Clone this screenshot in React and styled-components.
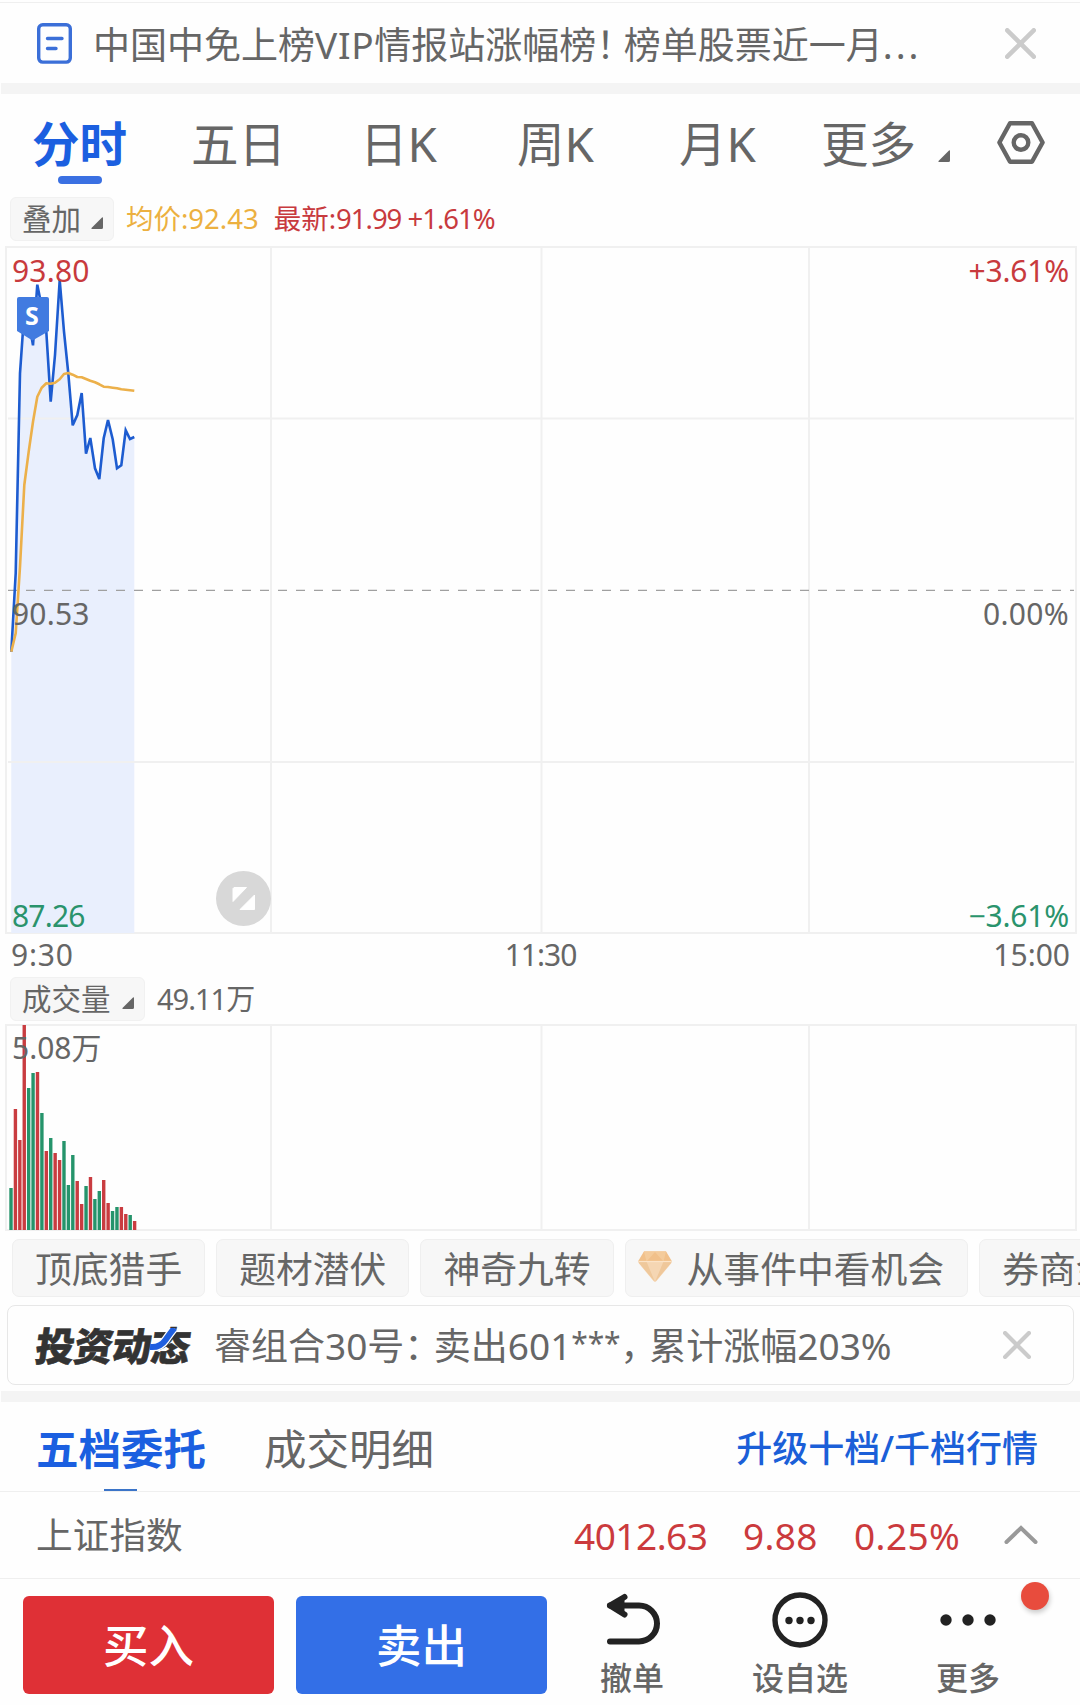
import React from "react";
import styled, { createGlobalStyle } from "styled-components";

const PRICE = [
  [34, 1235], [47, 1000], [60, 400], [73, 215], [86, 240], [99, 316], [112, 134], [125, 200],
  [139, 275], [152, 485], [165, 345], [179, 120], [192, 275], [205, 400], [218, 556], [232, 525],
  [245, 459], [258, 641], [271, 594], [285, 685], [298, 717], [311, 595], [324, 540], [338, 598],
  [351, 685], [364, 676], [377, 571], [390, 597], [403, 591],
];

const AVERAGE = [
  [34, 1235], [47, 1180], [60, 980], [73, 735], [86, 635], [99, 545], [112, 470], [125, 443],
  [139, 430], [152, 431], [165, 428], [179, 418], [192, 402], [205, 399], [218, 404], [232, 411],
  [245, 412], [258, 417], [271, 422], [285, 427], [298, 433], [311, 440], [324, 441], [338, 443],
  [351, 445], [364, 448], [377, 449], [403, 452],
];

const VOLUME = [
  ["g", 42], ["r", 121], ["r", 90], ["r", 205], ["g", 142], ["g", 157], ["r", 158], ["g", 117],
  ["r", 79], ["g", 92], ["r", 77], ["r", 70], ["g", 89], ["g", 45], ["g", 75], ["r", 49],
  ["r", 26], ["g", 44], ["r", 53], ["g", 31], ["g", 39], ["r", 50], ["r", 27], ["g", 19],
  ["g", 23], ["r", 23], ["r", 16], ["g", 15], ["r", 9],
];

// samples are in thirds of a pixel, measured from the top left of the frame
const toPoints = (data) =>
  data.map(([x, y]) => `${(x / 3 - 5).toFixed(1)},${(y / 3 - 6).toFixed(1)}`).join(" ");

const Close = ({ size }) =>
  <svg width={size} height={size} viewBox="0 0 30 30" fill="none" stroke="#cbcbcb" strokeWidth="4.4" strokeLinecap="round">
    <path d="M2.2 2.2L27.8 27.8M27.8 2.2L2.2 27.8" />
  </svg>
;

const Corner = () =>
  <svg width="12" height="12" viewBox="0 0 12 12">
    <path d="M11 0.5Q12 0 12 1V10.5Q12 12 10.5 12H1Q0 12 0.5 11Z" fill="#666" />
  </svg>
;

const Notice = () =>
  <NoticeBar>
    <svg width="35" height="41" viewBox="0 0 35 41" fill="none" stroke="#3b6fd8" strokeWidth="3.4" strokeLinecap="round">
      <rect x="1.7" y="1.7" width="31.6" height="37.4" rx="4" />
      <path d="M10.5 15.5H25M10.5 25.5H19" />
    </svg>
    <NoticeText>
      中国中免上榜<Spaced $by={0.7}>VIP</Spaced>情报站涨幅榜<Spaced $by={-9.5}>！</Spaced>榜单股票近一月<Spaced $by={3}>...</Spaced>
    </NoticeText>
    <Close size={31} />
  </NoticeBar>
;

const PeriodTabs = () =>
  <TabBar>
    <Tab $active $width={159}>分时</Tab>
    <Tab $width={169}>五日</Tab>
    <Tab $width={157}>日K</Tab>
    <Tab $width={162}>周K</Tab>
    <Tab $width={142}>月K</Tab>
    <Tab $width={117}>更多</Tab>
    <TabCorner><Corner /></TabCorner>
    <svg width="48" height="43" viewBox="0 0 48 43" fill="none" stroke="#666" strokeWidth="4.4" strokeLinejoin="round">
      <path d="M13 2.2H35L45.6 21.5L35 40.8H13L2.4 21.5Z" />
      <circle cx="24" cy="21.5" r="7.3" />
    </svg>
  </TabBar>
;

const PriceChart = () =>
  <Frame $height={688}>
    <svg width="1072" height="688" viewBox="0 0 1072 688" fill="none">
      <polygon points={`${toPoints(PRICE)} 129.3,687 6.2,687`} fill="#e9effd" />
      <path d="M266 0V688M536.5 0V688M804 0V688M3 172.5H1069M3 516H1069" stroke="#f0f0f0" strokeWidth="2" />
      <path d="M3 344.3H1069" stroke="#a0a0a0" strokeWidth="1.2" strokeDasharray="9 9" />
      <polyline points={toPoints(PRICE)} stroke="#1d5cd0" strokeWidth="2.6" />
      <polyline points={toPoints(AVERAGE)} stroke="#ecb04a" strokeWidth="2.6" strokeLinejoin="round" />
      <path d="M14 51H42Q44 51 44 53V85L27.5 94.5L12 85V53Q12 51 14 51Z" fill="#417be0" />
      <circle cx="238.5" cy="652.500" r="27.5" fill="#d8d8d8" />
      <path d="M229 641.5H241.5L228 655.5V642.5ZM249.5 649V663.5H235Z" fill="#fff" stroke="#fff" strokeLinejoin="round" />
    </svg>
    <Marker>S</Marker>
    <Corners $top={8}>
      <Axis $color="#c83a3d" $by={0.2}>93.80</Axis>
      <Axis $color="#c83a3d" $by={-0.2}>+3.61%</Axis>
    </Corners>
    <Corners $top={351}>
      <Axis $by={0.2}>90.53</Axis>
      <Axis $by={0.3}>0.00%</Axis>
    </Corners>
    <Corners $top={653}>
      <Axis $color="#2a936c" $by={-0.8}>87.26</Axis>
      <Axis $color="#2a936c" $by={-0.2}>−3.61%</Axis>
    </Corners>
  </Frame>
;

const VolumeChart = () =>
  <Frame $height={207}>
    <Corners $top={7}>
      <Axis $by={0}>5.08万</Axis>
    </Corners>
    <svg width="1072" height="207" viewBox="0 0 1072 207">
      <path d="M266 0V207M536.5 0V207M804 0V207" stroke="#f0f0f0" strokeWidth="2" />
      {VOLUME.map(([side, height], i) =>
        <rect
          key={i}
          x={4.3 + i * 4.415}
          y={206 - height}
          width="3.4"
          height={height}
          fill={side === "r" ? "#c93c40" : "#25946b"}
        />
      )}
    </svg>
  </Frame>
;

const Diamond = () =>
  <svg width="34" height="32" viewBox="0 0 34 32">
    <path d="M6 0.5H28L33.5 9.5Q34 11 33 12.5L18.5 30Q17 31.5 15.5 30L1 12.5Q0 11 0.5 9.5Z" fill="#f5d6b3" />
    <path d="M6 0.5H28L33.5 10H0.5Z" fill="#f1c08a" />
    <path d="M8.5 10.5L17 31L1 12L0.5 10.5Z" fill="#efc89b" />
    <path d="M25.5 10.5L17 31L33 12L33.5 10.5Z" fill="#efc79a" />
    <path d="M6 0.5L8.5 10.5L17 1L25.5 10.5L28 0.5" fill="#f4cb9b" />
    <path d="M1 10.5H33" stroke="#fbe3c8" strokeWidth="1.2" />
  </svg>
;

const Chips = () =>
  <ChipRow>
    <Chip>顶底猎手</Chip>
    <Chip>题材潜伏</Chip>
    <Chip>神奇九转</Chip>
    <Chip $icon><Diamond />从事件中看机会</Chip>
    <Chip>券商金股</Chip>
  </ChipRow>
;

const Feed = () =>
  <FeedCard>
    <FeedLogo>
      <span>投资动态</span>
      <svg width="30" height="26" viewBox="0 0 30 26" fill="none">
        <path d="M1 19Q10 20 15.5 12T24.5 0" stroke="#fefefe" strokeWidth="8.5" />
        <path d="M0 19Q10 20 15.5 12T24.5 0" stroke="#1f5fe0" strokeWidth="6" />
      </svg>
    </FeedLogo>
    <FeedText>
      睿组合30号<Spaced $by={-7.5}>：</Spaced>卖出601<Stars>***</Stars><Spaced $by={-8}>，</Spaced>累计涨幅203%
    </FeedText>
    <Close size={28} />
  </FeedCard>
;

const OrderTabs = () =>
  <OrderBar>
    <OrderTab $active>五档委托</OrderTab>
    <OrderTab>成交明细</OrderTab>
    <Upgrade>升级十档/千档行情</Upgrade>
  </OrderBar>
;

const IndexQuote = () =>
  <QuoteRow>
    <QuoteName>上证指数</QuoteName>
    <Quote $width={169} $by={-0.5}>4012.63</Quote>
    <Quote $width={111} $by={0.3}>9.88</Quote>
    <Quote $width={150} $by={0.4}>0.25%</Quote>
    <svg width="34" height="20" viewBox="0 0 34 20" fill="none" stroke="#999" strokeWidth="4" strokeLinecap="round">
      <path d="M2.5 17L17 3L31.5 17" />
    </svg>
  </QuoteRow>
;

const ActionBar = () =>
  <Actions>
    <Trade $color="#df3036">买入</Trade>
    <Trade $color="#336fe7">卖出</Trade>
    <Action $width={168}>
      <svg width="56" height="56" viewBox="0 0 56 56" fill="none" stroke="#222" strokeWidth="6" strokeLinecap="round" strokeLinejoin="round">
        <path d="M20.5 5L6 13.5L20.5 22.5Z" fill="#222" stroke="none" />
        <path d="M20.5 5L6 13.5L20.5 22.5" />
        <path d="M6 13.5H35A18 18 0 0 1 35 49.5H6" />
      </svg>
      撤单
    </Action>
    <Action $width={168}>
      <svg width="56" height="56" viewBox="0 0 56 56">
        <circle cx="28" cy="28" r="25" fill="none" stroke="#222" strokeWidth="5.4" />
        <circle cx="17" cy="28.5" r="3.7" fill="#222" />
        <circle cx="28" cy="28.5" r="3.7" fill="#222" />
        <circle cx="39" cy="28.5" r="3.7" fill="#222" />
      </svg>
      设自选
    </Action>
    <Action $width={168}>
      <svg width="56" height="56" viewBox="0 0 56 56" fill="#222">
        <circle cx="6" cy="28" r="5.7" />
        <circle cx="28" cy="28" r="5.7" />
        <circle cx="50" cy="28" r="5.7" />
      </svg>
      更多
      <Badge />
    </Action>
  </Actions>
;

const App = () =>
  <Screen>
    <GlobalStyle />
    <Notice />
    <Divider />
    <PeriodTabs />
    <InfoRow $height={55}>
      <Picker $width={104}>叠加<Corner /></Picker>
      <Info $color="#ecb040" $gap={12}>均价:92.43</Info>
      <Info $color="#c83a3e" $gap={15}>最新:<Spaced $by={-1}>91.99 +1.61%</Spaced></Info>
    </InfoRow>
    <PriceChart />
    <TimeAxis>
      <Spaced $by={0.8}>9:30</Spaced>
      <Spaced $by={-1}>11:30</Spaced>
      <Spaced $by={0}>15:00</Spaced>
    </TimeAxis>
    <InfoRow $height={51}>
      <Picker $width={135}>成交量<Corner /></Picker>
      <Info $large $gap={12}><Spaced $by={-1}>49.11</Spaced>万</Info>
    </InfoRow>
    <VolumeChart />
    <Chips />
    <Feed />
    <Divider />
    <OrderTabs />
    <IndexQuote />
    <ActionBar />
  </Screen>
;

export default App;

const GlobalStyle = createGlobalStyle`
  * {
    box-sizing: border-box;
  }

  body {
    margin: 0;
    background: #fff;
  }

  svg {
    display: block;
    flex-shrink: 0;
  }
`;

const Screen = styled.div`
  width: 1080px;
  height: 1705px;
  overflow: hidden;
  display: flex;
  flex-direction: column;
  background: #fefefe;
  color: #666;
  font-family: "Noto Sans", "Noto Sans CJK SC", sans-serif;
  line-height: 1;
  white-space: nowrap;

  > * {
    flex-shrink: 0;
  }
`;

const Spaced = styled.span`
  letter-spacing: ${(props) => props.$by}px;
`;

const Divider = styled.div`
  height: 11px;
  margin-left: 1px;
  background: #f4f4f4;
`;

const NoticeBar = styled.div`
  height: 81px;
  margin-top: 2px;
  border-top: 1px solid #efefef;
  padding: 0 44px 0 37px;
  display: flex;
  align-items: center;
`;

const NoticeText = styled.div`
  flex: 1;
  margin-left: 21px;
  padding-top: 2px;
  font-size: 37px;
`;

const TabBar = styled.div`
  height: 97px;
  padding-left: 32px;
  display: flex;
  align-items: center;
`;

const Tab = styled.div`
  width: ${(props) => props.$width}px;
  height: 97px;
  font-size: 47.5px;
  line-height: 99px;
  position: relative;
  color: ${(props) => (props.$active ? "#1b5fe0" : "#666")};
  font-weight: ${(props) => (props.$active ? 700 : 400)};

  &::after {
    content: "";
    display: ${(props) => (props.$active ? "block" : "none")};
    position: absolute;
    left: 26px;
    top: 82px;
    width: 44px;
    height: 8px;
    border-radius: 4px;
    background: #3a70e2;
  }
`;

const TabCorner = styled.div`
  width: 59px;
  padding-top: 27px;
`;

const InfoRow = styled.div`
  height: ${(props) => props.$height}px;
  padding: 0 0 0 10px;
  display: flex;
  align-items: center;
`;

const Picker = styled.div`
  width: ${(props) => props.$width}px;
  height: 44px;
  padding: 0 10px 0 11px;
  border: 1px solid #f1f1f1;
  border-radius: 6px;
  background: #f7f7f7;
  display: flex;
  align-items: center;
  justify-content: space-between;
  font-size: 29.5px;

  svg {
    margin-top: 9px;
  }
`;

const Info = styled.div`
  margin-left: ${(props) => props.$gap}px;
  font-size: ${(props) => (props.$large ? 29 : 27.5)}px;
  color: ${(props) => props.$color || "#666"};
`;

const Frame = styled.div`
  position: relative;
  width: 1072px;
  height: ${(props) => props.$height}px;
  margin-left: 5px;
  box-shadow: inset 0 0 0 2px #f0f0f0;
`;

const Corners = styled.div`
  position: absolute;
  left: 7px;
  right: 8px;
  top: ${(props) => props.$top}px;
  display: flex;
  justify-content: space-between;
`;

const Axis = styled.span`
  font-size: 30px;
  line-height: 33px;
  color: ${(props) => props.$color || "#666"};
  letter-spacing: ${(props) => props.$by}px;
`;

const Marker = styled.span`
  position: absolute;
  left: 11px;
  top: 57px;
  width: 32px;
  text-align: center;
  font-size: 25px;
  font-weight: 700;
  color: #fff;
`;

const TimeAxis = styled.div`
  height: 39px;
  padding: 3px 10px 0 11px;
  display: grid;
  grid-template-columns: 1fr auto 1fr;
  align-items: center;
  font-size: 30px;

  > :last-child {
    text-align: right;
  }
`;

const ChipRow = styled.div`
  margin-top: 8px;
  padding-left: 12px;
  display: flex;
  gap: 11px;
`;

const Chip = styled.div`
  height: 58px;
  flex-shrink: 0;
  padding: ${(props) => (props.$icon ? "2px 23px 0 12px" : "2px 22px 0")};
  border: 1px solid #efefef;
  border-radius: 7px;
  background: #f7f7f7;
  display: flex;
  align-items: center;
  font-size: 36.8px;

  svg {
    margin: 0 15px 5px 0;
  }
`;

const FeedCard = styled.div`
  height: 80px;
  margin: 8px 6px 6px 7px;
  padding: 0 42px 0 28px;
  border: 1.5px solid #e7e7e7;
  border-radius: 8px;
  display: flex;
  align-items: center;
`;

const FeedLogo = styled.div`
  position: relative;
  width: 157px;
  font-size: 39px;
  font-weight: 900;
  letter-spacing: -0.5px;
  color: #333;

  span {
    display: block;
    transform: skewX(-8deg);
    -webkit-text-stroke: 0.6px #333;
  }

  svg {
    position: absolute;
    left: 114px;
    top: 2px;
  }
`;

const FeedText = styled.div`
  flex: 1;
  margin-left: 21px;
  padding-top: 1px;
  font-size: 37px;
`;

const Stars = styled.span`
  position: relative;
  top: -6px;
  font-size: 30px;
  letter-spacing: -0.2px;
  line-height: 0;
`;

const OrderBar = styled.div`
  height: 90px;
  padding: 0 42px 0 36px;
  border-bottom: 1px solid #efefef;
  display: flex;
  align-items: center;
`;

const OrderTab = styled.div`
  position: relative;
  height: 89px;
  margin-right: 58px;
  font-size: 42.5px;
  line-height: 94px;
  color: ${(props) => (props.$active ? "#1b5fe0" : "#666")};
  font-weight: ${(props) => (props.$active ? 700 : 400)};

  &::after {
    content: "";
    display: ${(props) => (props.$active ? "block" : "none")};
    position: absolute;
    left: 68px;
    bottom: 0;
    width: 33px;
    height: 2px;
    background: #3b74c8;
  }
`;

const Upgrade = styled.div`
  margin-left: auto;
  padding-top: 4px;
  font-size: 36px;
  font-weight: 500;
  color: #1b5fd8;
`;

const QuoteRow = styled.div`
  height: 87px;
  padding-left: 36px;
  border-bottom: 1px solid #efefef;
  display: flex;
  align-items: center;
  font-size: 37px;
`;

const QuoteName = styled.div`
  width: 538px;
  padding-top: 1px;
  font-size: 36.7px;
`;

const Quote = styled.div`
  width: ${(props) => props.$width}px;
  letter-spacing: ${(props) => props.$by}px;
  color: #cb3a3d;
`;

const Actions = styled.div`
  flex: 1;
  padding: 17px 0 0 23px;
  display: flex;
`;

const Trade = styled.div`
  width: 251px;
  height: 98px;
  margin-right: 22px;
  padding-top: 2px;
  border-radius: 6px;
  display: flex;
  align-items: center;
  justify-content: center;
  font-size: 45.5px;
  font-weight: 500;
  color: #fff;
  background: ${(props) => props.$color};
`;

const Action = styled.div`
  position: relative;
  width: ${(props) => props.$width}px;
  left: -21px;
  margin-top: -4px;
  display: flex;
  flex-direction: column;
  align-items: center;
  gap: 14px;
  font-size: 32px;
  font-weight: 500;
`;

const Badge = styled.span`
  position: absolute;
  left: 137px;
  top: -10px;
  width: 28px;
  height: 28px;
  border-radius: 50%;
  background: #e84c3d;
  box-shadow: 1px 3px 5px rgba(0, 0, 0, 0.2);
`;
